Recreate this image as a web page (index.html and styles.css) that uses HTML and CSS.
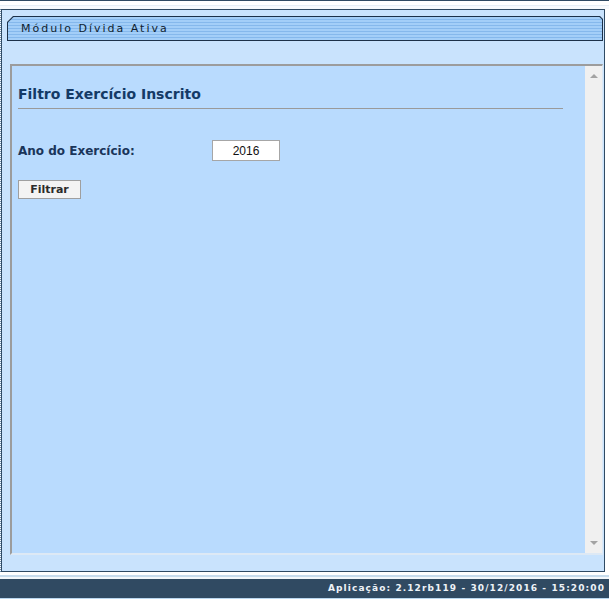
FILE: index.html
```html
<!DOCTYPE html>
<html lang="pt-BR">
<head>
<meta charset="utf-8">
<title>Módulo Dívida Ativa</title>
<link rel="stylesheet" href="styles.css">
</head>
<body>
<div class="page">
  <div class="topbar"></div>
  <div class="frame">
    <div class="module">
      <div class="tab"><div class="tab-inner"><span class="tab-title">Módulo Dívida Ativa</span></div></div>
      <div class="panel">
        <div class="content">
          <h1 class="title">Filtro Exercício Inscrito</h1>
          <div class="field-row">
            <label class="field-label" for="ano">Ano do Exercício:</label>
            <input class="year" id="ano" type="text" value="2016">
          </div>
          <button class="btn" type="button">Filtrar</button>
        </div>
        <div class="scrollbar">
          <span class="arrow arrow-up"></span>
          <span class="arrow arrow-down"></span>
        </div>
      </div>
    </div>
  </div>
  <div class="sep"></div>
  <div class="status">Aplicação: 2.12rb119 - 30/12/2016 - 15:20:00</div>
</div>
</body>
</html>
```

FILE: styles.css
```css
html, body {
  margin: 0;
  padding: 0;
  background: #ffffff;
}

.page {
  width: 609px;
  height: 599px;
  display: flex;
  flex-direction: column;
  font-family: "DejaVu Sans", Verdana, sans-serif;
  overflow: hidden;
}

.topbar {
  height: 8px;
  border-top: 1px solid #2f4a63;
  background: linear-gradient(to bottom, #ffffff 0 4px, #e6eef6 4px 5px, #f6f9fc 5px 8px);
}

.frame {
  border-left: 1px dotted #6f92b4;
  width: 604px;
}

.module {
  box-sizing: border-box;
  width: 604px;
  height: 563px;
  border: 1px solid #2f4a63;
  background: #c9e3fd;
  padding: 6px 1px 0 5px;
  display: flex;
  flex-direction: column;
}

.tab {
  height: 25px;
  padding: 1px;
  box-sizing: border-box;
  background: #1c3149;
  clip-path: polygon(6px 0, calc(100% - 3px) 0, 100% 3px, 100% 100%, 0 100%, 0 6px);
}

.tab-inner {
  height: 100%;
  background: repeating-linear-gradient(to bottom, #a3cef8 0 2px, #85b8ec 2px 3px);
  clip-path: polygon(5.6px 0, calc(100% - 2.6px) 0, 100% 2.6px, 100% 100%, 0 100%, 0 5.6px);
  display: flex;
  align-items: center;
  padding-left: 13px;
}

.tab-title {
  font-size: 11px;
  letter-spacing: 2px;
  color: #0f1e30;
  line-height: 23px;
}

.panel {
  margin: 23px 0 0 3px;
  height: 491px;
  box-sizing: border-box;
  border-top: 2px solid #9c9c9c;
  border-left: 2px solid #9c9c9c;
  border-bottom: 2px solid #dde9f5;
  border-right: 1px solid #dde9f5;
  background: #b9dbfe;
  display: flex;
}

.content {
  flex: 1;
  padding: 20px 22px 0 6px;
}

.title {
  margin: 0;
  font-size: 14px;
  font-weight: bold;
  color: #143a66;
  line-height: 17px;
  padding-bottom: 5px;
  border-bottom: 1px solid #9a9a9a;
}

.field-row {
  display: flex;
  align-items: center;
  margin-top: 31px;
}

.field-label {
  width: 194px;
  font-size: 12px;
  font-weight: bold;
  color: #1a355a;
}

.year {
  box-sizing: border-box;
  width: 68px;
  height: 21px;
  margin: 0;
  border: 1px solid #a6a6a6;
  background: #ffffff;
  font-family: "Liberation Sans", Arial, sans-serif;
  font-size: 12px;
  color: #111111;
  text-align: center;
  padding: 0;
}

.btn {
  display: block;
  box-sizing: border-box;
  width: 63px;
  height: 19px;
  margin-top: 19px;
  padding: 0;
  border: 1px solid #9f9f9f;
  background: #f3f3f3;
  font-family: "DejaVu Sans", Verdana, sans-serif;
  font-size: 11px;
  font-weight: bold;
  color: #2b2b2b;
}

.scrollbar {
  width: 17px;
  background: #f0f0f0;
  display: flex;
  flex-direction: column;
  justify-content: space-between;
  align-items: center;
  padding: 8px 0 8px;
}

.arrow {
  width: 0;
  height: 0;
  border-left: 4px solid transparent;
  border-right: 4px solid transparent;
}

.arrow-up {
  border-bottom: 4px solid #a3a3a3;
}

.arrow-down {
  border-top: 4px solid #a3a3a3;
}

.sep {
  height: 7px;
  background: linear-gradient(to bottom, #ffffff 0 3px, #c6dbec 3px 5px, #f2f7fb 5px 7px);
}

.status {
  height: 19px;
  border-bottom: 1px solid #b9d7ef;
  background: #304a62;
  color: #eef3f8;
  font-size: 9px;
  font-weight: bold;
  letter-spacing: 1.1px;
  line-height: 19px;
  text-align: right;
  padding-right: 4px;
}
```
